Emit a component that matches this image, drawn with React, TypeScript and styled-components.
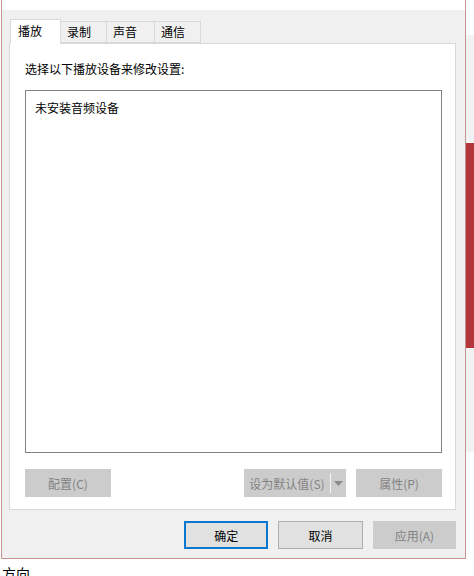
import styled, { createGlobalStyle } from "styled-components"

const GlobalStyle = createGlobalStyle`
  html, body {
    margin: 0;
    padding: 0;
    background: #ffffff;
  }
  body {
    font-family: "Noto Sans CJK SC", "Noto Sans", sans-serif;
    font-size: 12px;
    color: #000000;
  }
`

const Screen = styled.div`
  width: 474px;
  height: 576px;
  overflow: hidden;
  display: flex;
  align-items: flex-start;
`

const LeftColumn = styled.div`
  width: 466px;
  display: flex;
  flex-direction: column;
`

const Window = styled.div`
  margin-left: 1px;
  width: 463px;
  border: 1px solid #c99490;
  border-top: none;
  display: flex;
  flex-direction: column;
`

const TitleRemnant = styled.div`
  height: 10px;
  background: #ffffff;
`

const Body = styled.div`
  background: #f0f0f0;
  height: 548px;
  padding: 9px 9px 0 7px;
  box-sizing: border-box;
  display: flex;
  flex-direction: column;
`

const TabStrip = styled.div`
  display: flex;
  align-items: flex-end;
  height: 24px;
  padding-left: 1px;
  position: relative;
  z-index: 1;
`

const Tab = styled.div<{ $active?: boolean; $w: number }>`
  box-sizing: border-box;
  width: ${(p) => p.$w}px;
  height: ${(p) => (p.$active ? 25 : 22)}px;
  margin-bottom: ${(p) => (p.$active ? -1 : 0)}px;
  background: ${(p) => (p.$active ? "#ffffff" : "#f0f0f0")};
  border: 1px solid #d9d9d9;
  border-bottom: ${(p) => (p.$active ? "none" : "1px solid #d9d9d9")};
  border-left: ${(p) => (p.$active ? "1px solid #d9d9d9" : "none")};
  padding-left: ${(p) => (p.$active ? 7 : 6)}px;
  display: flex;
  align-items: ${(p) => (p.$active ? "flex-start" : "center")};
  padding-top: ${(p) => (p.$active ? 3 : 0)}px;
  line-height: 16px;
  font-size: 12px;
`

const Panel = styled.div`
  box-sizing: border-box;
  width: 447px;
  height: 467px;
  background: #ffffff;
  border: 1px solid #d9d9d9;
  padding: 0 0 0 15px;
  display: flex;
  flex-direction: column;
`

const Caption = styled.div`
  margin-top: 17px;
  height: 16px;
  line-height: 16px;
  font-size: 12px;
`

const ListBox = styled.div`
  box-sizing: border-box;
  margin-top: 13px;
  width: 417px;
  height: 363px;
  border: 1px solid #828282;
  padding: 9px 0 0 9px;
  line-height: 16px;
  font-size: 12px;
`

const PanelButtons = styled.div`
  display: flex;
  margin-top: 16px;
  width: 417px;
`

const Button = styled.div<{ $w: number; $disabled?: boolean; $default?: boolean }>`
  box-sizing: border-box;
  width: ${(p) => p.$w}px;
  height: 28px;
  display: flex;
  align-items: center;
  justify-content: center;
  font-size: 12px;
  background: ${(p) => (p.$disabled ? "#cccccc" : "#e1e1e1")};
  color: ${(p) => (p.$disabled ? "#838383" : "#000000")};
  border: ${(p) =>
    p.$default ? "2px solid #0a78d0" : p.$disabled ? "1px solid #cccccc" : "1px solid #adadad"};
`

const Spacer = styled.div`
  flex: 1;
`

const SplitButton = styled.div`
  box-sizing: border-box;
  width: 102px;
  height: 28px;
  margin-right: 10px;
  background: #cccccc;
  display: flex;
  align-items: center;
  color: #838383;
`

const SplitMain = styled.div`
  width: 86px;
  text-align: center;
  font-size: 12px;
`

const SplitDivider = styled.div`
  width: 1px;
  height: 20px;
  background: #f4f4f4;
`

const SplitArrow = styled.div`
  flex: 1;
  display: flex;
  justify-content: center;
  align-items: center;
`

const DialogButtons = styled.div`
  margin-top: 11px;
  display: flex;
  gap: 10px;
  padding-left: 175px;
`

const BelowText = styled.div`
  margin-top: 4px;
  margin-left: 2px;
  font-size: 14px;
  line-height: 20px;
`

const RightStrip = styled.div`
  width: 8px;
  display: flex;
  flex-direction: column;
`

const StripBlock = styled.div<{ $h: number; $c: string }>`
  height: ${(p) => p.$h}px;
  background: ${(p) => p.$c};
`

const App = () => {
  return (
    <>
      <GlobalStyle />
      <Screen>
        <LeftColumn>
          <Window>
            <TitleRemnant />
            <Body>
              <TabStrip>
                <Tab $active $w={51}>播放</Tab>
                <Tab $w={46}>录制</Tab>
                <Tab $w={48}>声音</Tab>
                <Tab $w={46}>通信</Tab>
              </TabStrip>
              <Panel>
                <Caption>选择以下播放设备来修改设置:</Caption>
                <ListBox>未安装音频设备</ListBox>
                <PanelButtons>
                  <Button $w={86} $disabled>配置(C)</Button>
                  <Spacer />
                  <SplitButton>
                    <SplitMain>设为默认值(S)</SplitMain>
                    <SplitDivider />
                    <SplitArrow>
                      <svg width="9" height="5" viewBox="0 0 9 5">
                        <path d="M0 0 H9 L4.5 5 Z" fill="#8a8a8a" />
                      </svg>
                    </SplitArrow>
                  </SplitButton>
                  <Button $w={86} $disabled>属性(P)</Button>
                </PanelButtons>
              </Panel>
              <DialogButtons>
                <Button $w={86} $default>确定</Button>
                <Button $w={86}>取消</Button>
                <Button $w={85} $disabled>应用(A)</Button>
              </DialogButtons>
            </Body>
          </Window>
          <BelowText>方向</BelowText>
        </LeftColumn>
        <RightStrip>
          <StripBlock $h={35} $c="#ffffff" />
          <StripBlock $h={108} $c="#f2f2f2" />
          <StripBlock $h={205} $c="#b3363b" />
          <StripBlock $h={104} $c="#f2f2f2" />
          <StripBlock $h={124} $c="#ffffff" />
        </RightStrip>
      </Screen>
    </>
  )
}

export default App
